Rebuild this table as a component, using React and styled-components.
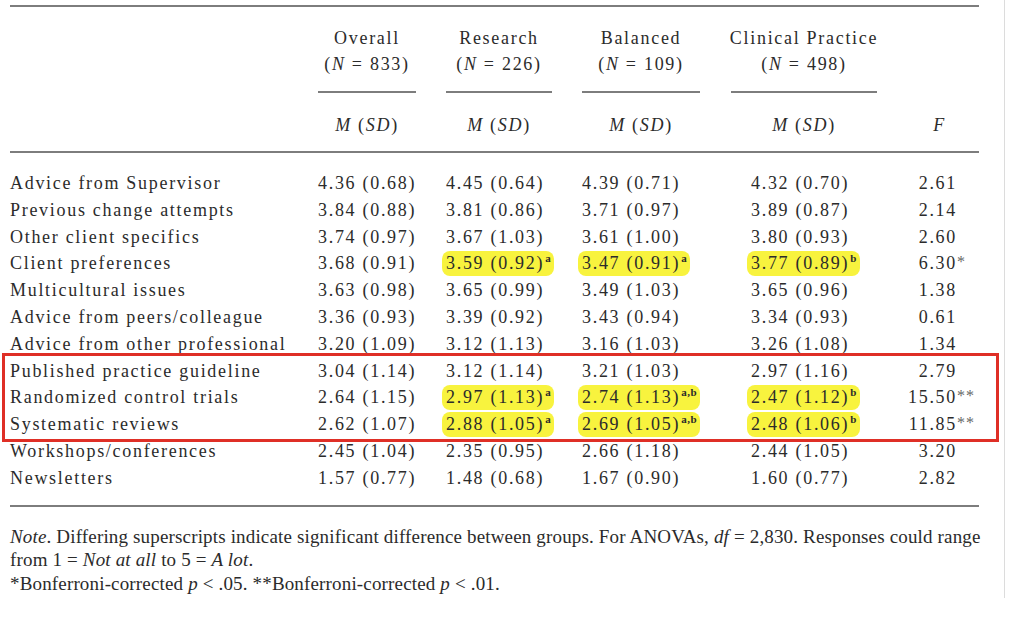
import styled, { createGlobalStyle } from 'styled-components';

const GlobalStyle = createGlobalStyle`
  html, body {
    margin: 0;
    padding: 0;
    background: #ffffff;
  }
  body {
    font-family: "Liberation Serif", "Times New Roman", serif;
    color: #2b2b2b;
  }
`;

const groups = [
  { title: 'Overall', n: '833', width: 98 },
  { title: 'Research', n: '226', width: 106 },
  { title: 'Balanced', n: '109', width: 118 },
  { title: 'Clinical Practice', n: '498', width: 146 },
];

const rows = [
  ['Advice from Supervisor', '4.36 (0.68)', '4.45 (0.64)', '4.39 (0.71)', '4.32 (0.70)', '2.61'],
  ['Previous change attempts', '3.84 (0.88)', '3.81 (0.86)', '3.71 (0.97)', '3.89 (0.87)', '2.14'],
  ['Other client specifics', '3.74 (0.97)', '3.67 (1.03)', '3.61 (1.00)', '3.80 (0.93)', '2.60'],
  [
    'Client preferences',
    '3.68 (0.91)',
    { v: '3.59 (0.92)', sup: 'a' },
    { v: '3.47 (0.91)', sup: 'a' },
    { v: '3.77 (0.89)', sup: 'b' },
    '6.30',
    '*',
  ],
  ['Multicultural issues', '3.63 (0.98)', '3.65 (0.99)', '3.49 (1.03)', '3.65 (0.96)', '1.38'],
  ['Advice from peers/colleague', '3.36 (0.93)', '3.39 (0.92)', '3.43 (0.94)', '3.34 (0.93)', '0.61'],
  ['Advice from other professional', '3.20 (1.09)', '3.12 (1.13)', '3.16 (1.03)', '3.26 (1.08)', '1.34'],
];

const boxedRows = [
  ['Published practice guideline', '3.04 (1.14)', '3.12 (1.14)', '3.21 (1.03)', '2.97 (1.16)', '2.79'],
  [
    'Randomized control trials',
    '2.64 (1.15)',
    { v: '2.97 (1.13)', sup: 'a' },
    { v: '2.74 (1.13)', sup: 'a,b' },
    { v: '2.47 (1.12)', sup: 'b' },
    '15.50',
    '**',
  ],
  [
    'Systematic reviews',
    '2.62 (1.07)',
    { v: '2.88 (1.05)', sup: 'a' },
    { v: '2.69 (1.05)', sup: 'a,b' },
    { v: '2.48 (1.06)', sup: 'b' },
    '11.85',
    '**',
  ],
];

const tailRows = [
  ['Workshops/conferences', '2.45 (1.04)', '2.35 (0.95)', '2.66 (1.18)', '2.44 (1.05)', '3.20'],
  ['Newsletters', '1.57 (0.77)', '1.48 (0.68)', '1.67 (0.90)', '1.60 (0.77)', '2.82'],
];

function Value({ cell }) {
  if (typeof cell === 'string') return <span>{cell}</span>;
  return (
    <Highlight>
      {cell.v}
      <Sup>{cell.sup}</Sup>
    </Highlight>
  );
}

function Row({ row }) {
  const [label, overall, research, balanced, clinical, f, stars] = row;
  return (
    <DataRow>
      <Label>{label}</Label>
      <Cell>
        <Value cell={overall} />
      </Cell>
      <Cell>
        <Value cell={research} />
      </Cell>
      <Cell>
        <Value cell={balanced} />
      </Cell>
      <Cell $indent={20}>
        <Value cell={clinical} />
      </Cell>
      <FCell>
        <FNum>{f}</FNum>
        {stars && <Stars>{stars}</Stars>}
      </FCell>
    </DataRow>
  );
}

function App() {
  return (
    <Page>
      <GlobalStyle />
      <Table>
        <Rule />
        <HeadRow>
          <span />
          {groups.map((g) => (
            <GroupHead key={g.title} $width={g.width}>
              <HeadLine>{g.title}</HeadLine>
              <HeadLine>
                (<i>N</i> = {g.n})
              </HeadLine>
              <Underline />
            </GroupHead>
          ))}
          <span />
        </HeadRow>
        <SubHeadRow>
          <span />
          {groups.map((g) => (
            <SubHead key={g.title} $width={g.width}>
              <i>M</i> (<i>SD</i>)
            </SubHead>
          ))}
          <FHead>
            <i>F</i>
          </FHead>
        </SubHeadRow>
        <Rule />
        <Body>
          {rows.map((r) => (
            <Row key={r[0]} row={r} />
          ))}
          <Boxed>
            {boxedRows.map((r) => (
              <Row key={r[0]} row={r} />
            ))}
          </Boxed>
          {tailRows.map((r) => (
            <Row key={r[0]} row={r} />
          ))}
        </Body>
        <Rule />
        <Note>
          <NoteLine>
            <i>Note</i>. Differing superscripts indicate significant difference between groups. For ANOVAs,{' '}
            <i>df</i> = 2,830. Responses could range
          </NoteLine>
          <NoteLine>
            from 1 = <i>Not at all</i> to 5 = <i>A lot</i>.
          </NoteLine>
          <NoteLine>
            *Bonferroni-corrected <i>p</i> &lt; .05. **Bonferroni-corrected <i>p</i> &lt; .01.
          </NoteLine>
        </Note>
      </Table>
    </Page>
  );
}

const COLUMNS = '308px 128px 136px 149px 169px 79px';

const Page = styled.div`
  width: 1005px;
  height: 598px;
  box-sizing: border-box;
  padding: 5px 0 0 10px;
  border-right: 1px solid #dcdcdc;
`;

const Table = styled.div`
  width: 969px;
  display: flex;
  flex-direction: column;
`;

const Rule = styled.div`
  height: 2px;
  background: #7d7d7d;
`;

const HeadRow = styled.div`
  display: grid;
  grid-template-columns: ${COLUMNS};
  padding-top: 18px;
  font-size: 18px;
  letter-spacing: 1.7px;
`;

const GroupHead = styled.div`
  width: ${({ $width }) => $width}px;
  display: flex;
  flex-direction: column;
  align-items: center;
`;

const HeadLine = styled.div`
  line-height: 26px;
  white-space: nowrap;
`;

const Underline = styled.div`
  align-self: stretch;
  height: 2px;
  margin-top: 14px;
  background: #7d7d7d;
`;

const SubHeadRow = styled.div`
  display: grid;
  grid-template-columns: ${COLUMNS};
  padding: 19px 0 13px;
  font-size: 18px;
  letter-spacing: 1.7px;
  line-height: 26px;
`;

const SubHead = styled.div`
  width: ${({ $width }) => $width}px;
  text-align: center;
  white-space: nowrap;
`;

const FHead = styled.div`
  text-align: center;
`;

const Body = styled.div`
  display: flex;
  flex-direction: column;
  padding: 16.6px 0 13.6px;
`;

const Boxed = styled.div`
  position: relative;

  &::after {
    content: '';
    position: absolute;
    top: -4px;
    bottom: -4px;
    left: -8px;
    right: -20px;
    border: 3px solid #df2f26;
    pointer-events: none;
  }
`;

const DataRow = styled.div`
  display: grid;
  grid-template-columns: ${COLUMNS};
  height: 26.8px;
  align-items: center;
  font-size: 18px;
  letter-spacing: 1.7px;
  line-height: 26px;
  white-space: nowrap;
`;

const Label = styled.div``;

const Cell = styled.div`
  padding-left: ${({ $indent }) => $indent || 0}px;
`;

const Highlight = styled.span`
  display: inline-block;
  background: #f8f33e;
  border-radius: 8px;
  margin-left: -4px;
  padding: 0 3px 0 4px;
  line-height: 25px;
`;

const Sup = styled.sup`
  font-size: 11px;
  font-weight: 700;
  letter-spacing: 0.5px;
  line-height: 0;
  vertical-align: 7px;
  margin-left: 1px;
`;

const FCell = styled.div`
  display: flex;
  align-items: baseline;
`;

const FNum = styled.span`
  width: 57px;
  text-align: right;
`;

const Stars = styled.span`
  color: #666666;
  font-size: 16px;
  letter-spacing: 1px;
  position: relative;
  top: -2px;
`;

const Note = styled.div`
  padding-top: 18px;
  font-size: 19px;
  letter-spacing: 0.16px;
  line-height: 23.5px;
`;

const NoteLine = styled.div`
  white-space: nowrap;
`;

export default App;
